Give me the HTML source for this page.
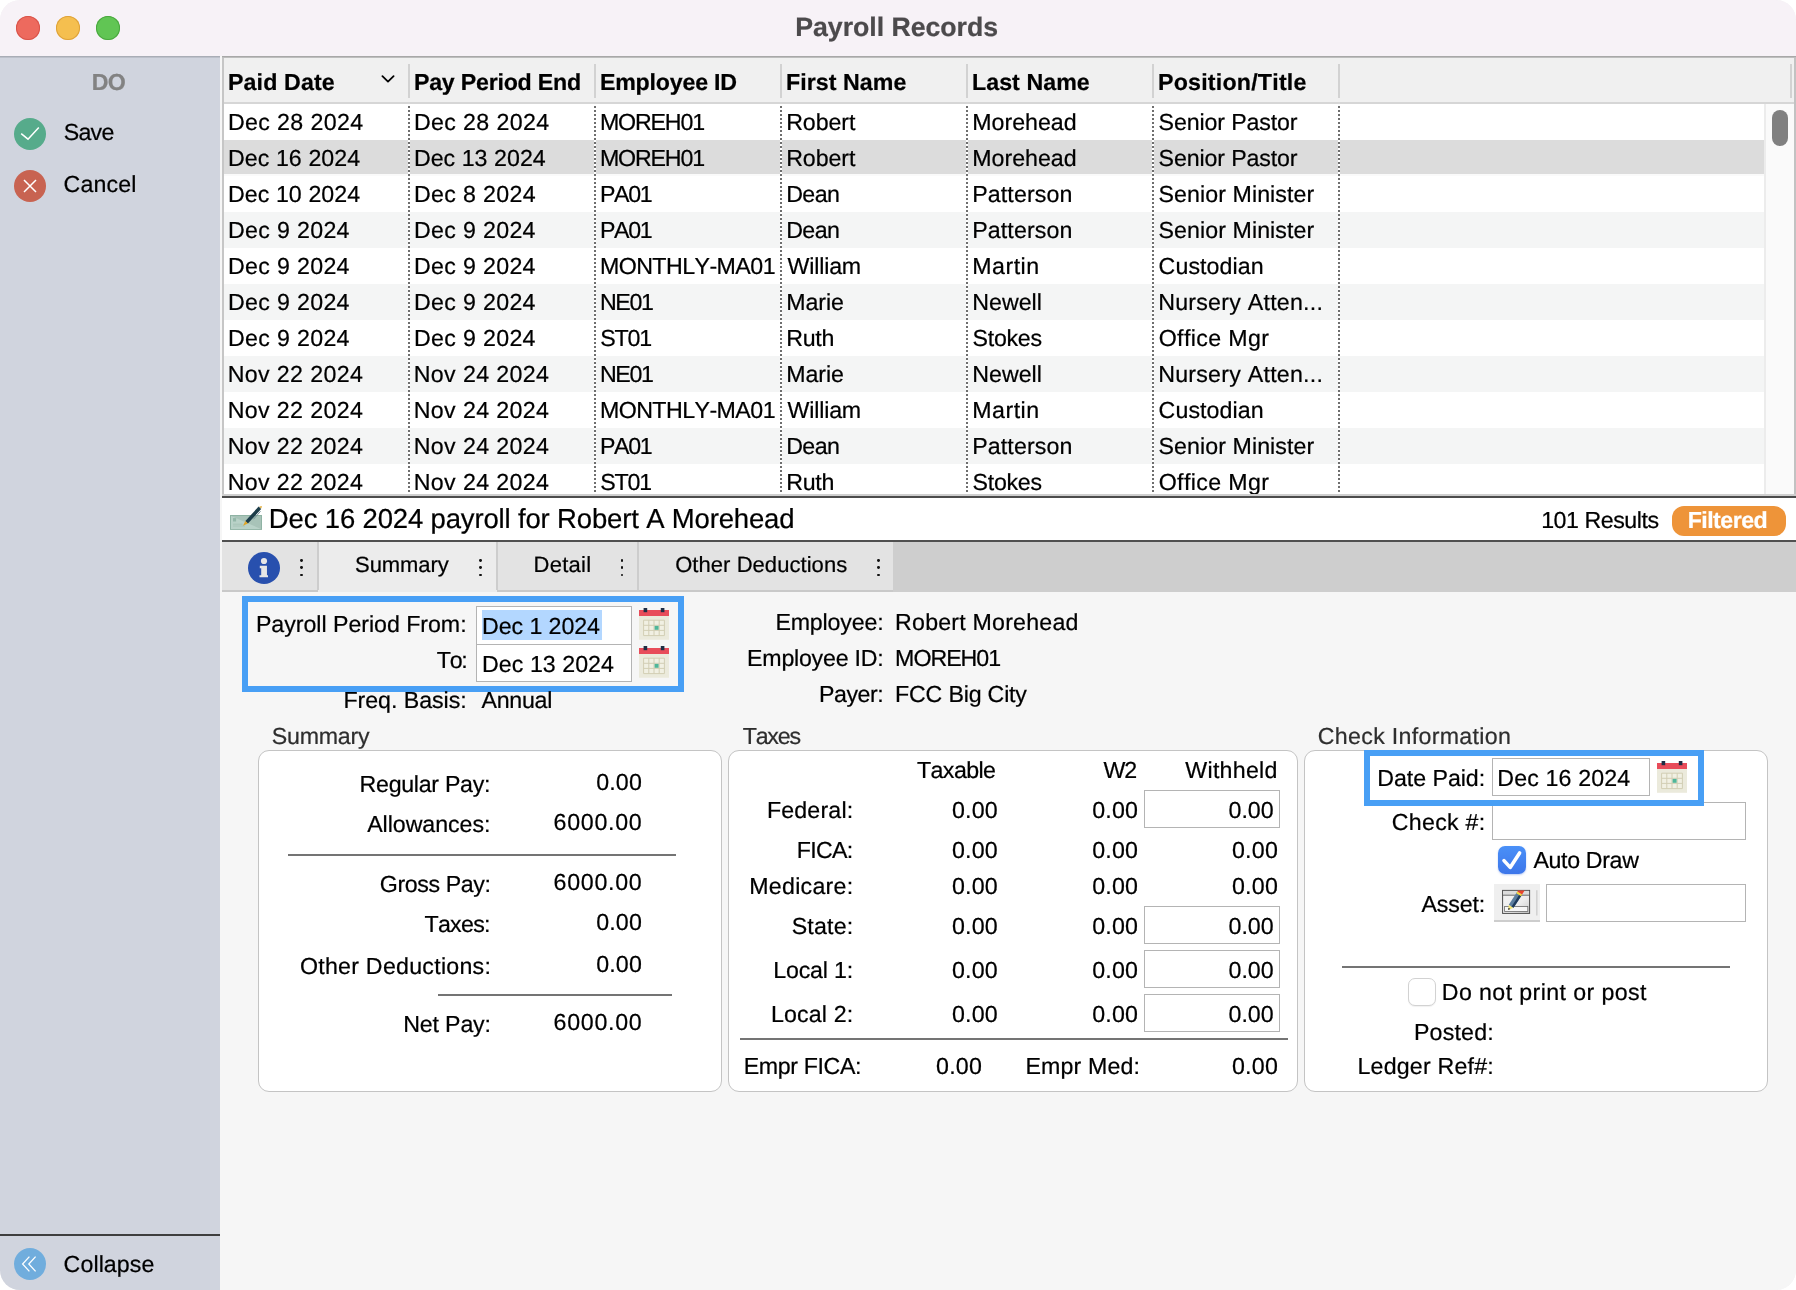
<!DOCTYPE html>
<html><head><meta charset="utf-8"><title>Payroll Records</title><style>html,body{margin:0;padding:0;background:#fff;}
body{text-rendering:geometricPrecision;width:1796px;height:1290px;overflow:hidden;position:relative;font-family:"Liberation Sans",sans-serif;font-kerning:none;}
#win{will-change:transform;position:absolute;left:0;top:0;width:1796px;height:1290px;border-radius:20px;overflow:hidden;background:#f6f6f6;}
.r{position:absolute;}
.t{position:absolute;white-space:nowrap;line-height:1;color:#000;-webkit-text-stroke:0.22px currentColor;}
</style></head><body><div id="win">
<div class="r" style="left:0px;top:0px;width:1796px;height:56px;background:#f7f2f7;"></div>
<div class="r" style="left:16px;top:16px;width:24px;height:24px;background:#ed6a5e;border-radius:50%;box-shadow:inset 0 0 0 1px #d8544a;"></div>
<div class="r" style="left:56px;top:16px;width:24px;height:24px;background:#f5bf4f;border-radius:50%;box-shadow:inset 0 0 0 1px #dea23a;"></div>
<div class="r" style="left:96px;top:16px;width:24px;height:24px;background:#61c554;border-radius:50%;box-shadow:inset 0 0 0 1px #4aa73f;"></div>
<div class="t" style="left:795.31px;top:14px;font-size:26.7px;letter-spacing:-0.037px;font-weight:bold;color:#4c4a4c;">Payroll Records</div>
<div class="r" style="left:0px;top:56px;width:220px;height:1234px;background:#d0d4de;"></div>
<div class="r" style="left:0px;top:56px;width:220px;height:1px;background:#a9adb6;"></div>
<div class="r" style="left:0px;top:57px;width:220px;height:1px;background:#bcc0ca;"></div>
<div class="t" style="left:91.75px;top:71px;font-size:23.2px;letter-spacing:-0.674px;font-weight:bold;color:#828282;">DO</div>
<svg class="r" style="left:14px;top:118px" width="32" height="32" viewBox="0 0 32 32"><circle cx="16" cy="16" r="16" fill="#56ab8b"/><path d="M7.2 15.6 L14 21.2 L24.8 9.4" fill="none" stroke="#fff" stroke-width="1.5"/></svg>
<div class="t" style="left:63.75px;top:121px;font-size:23.2px;letter-spacing:-0.765px;">Save</div>
<svg class="r" style="left:14px;top:170px" width="32" height="32" viewBox="0 0 32 32"><circle cx="16" cy="16" r="16" fill="#c86351"/><path d="M10 10 L22 22 M22 10 L10 22" fill="none" stroke="#fff" stroke-width="1.5"/></svg>
<div class="t" style="left:63.62px;top:173px;font-size:23.2px;letter-spacing:0.143px;">Cancel</div>
<div class="r" style="left:0px;top:1234px;width:220px;height:2px;background:#3e3e3e;"></div>
<svg class="r" style="left:14px;top:1248px" width="32" height="32" viewBox="0 0 32 32"><circle cx="16" cy="16" r="16" fill="#70addd"/><path d="M15.4 8.6 L8.6 16 L15.4 23.4 M21.6 8.6 L14.8 16 L21.6 23.4" fill="none" stroke="#fff" stroke-width="1.3"/></svg>
<div class="t" style="left:63.62px;top:1253px;font-size:23.2px;letter-spacing:0.076px;">Collapse</div>
<div class="r" style="left:220px;top:56px;width:1576px;height:1234px;background:#f6f6f6;"></div>
<div class="r" style="left:222px;top:56px;width:1574px;height:2px;background:#a8a8a8;"></div>
<div class="r" style="left:222px;top:57px;width:1574px;height:1px;background:#bebebe;"></div>
<div class="r" style="left:222px;top:58px;width:2px;height:438px;background:#c6c6c6;"></div>
<div class="r" style="left:1794px;top:58px;width:2px;height:438px;background:#c2c2c2;"></div>
<div class="r" style="left:224px;top:58px;width:1570px;height:44px;background:#f0f0f0;"></div>
<div class="r" style="left:224px;top:102px;width:1570px;height:2px;background:#d6d6d6;"></div>
<div class="r" style="left:224px;top:104px;width:1540px;height:390px;background:#fff;"></div>
<div class="r" style="left:224px;top:140px;width:1540px;height:34px;background:#dcdcdc;"></div>
<div class="r" style="left:224px;top:174px;width:1540px;height:2px;background:#fafafa;"></div>
<div class="r" style="left:224px;top:212px;width:1540px;height:36px;background:#f4f5f5;"></div>
<div class="r" style="left:224px;top:284px;width:1540px;height:36px;background:#f4f5f5;"></div>
<div class="r" style="left:224px;top:356px;width:1540px;height:36px;background:#f4f5f5;"></div>
<div class="r" style="left:224px;top:428px;width:1540px;height:36px;background:#f4f5f5;"></div>
<div class="t" style="left:227.90px;top:111px;font-size:23.2px;letter-spacing:0.382px;">Dec 28 2024</div>
<div class="t" style="left:413.90px;top:111px;font-size:23.2px;letter-spacing:0.382px;">Dec 28 2024</div>
<div class="t" style="left:599.90px;top:111px;font-size:23.2px;letter-spacing:-1.154px;">MOREH01</div>
<div class="t" style="left:786.20px;top:111px;font-size:23.2px;letter-spacing:-0.092px;">Robert</div>
<div class="t" style="left:972.20px;top:111px;font-size:23.2px;letter-spacing:0.004px;">Morehead</div>
<div class="t" style="left:1158.55px;top:111px;font-size:23.2px;letter-spacing:-0.127px;">Senior Pastor</div>
<div class="t" style="left:227.90px;top:147px;font-size:23.2px;letter-spacing:0.082px;">Dec 16 2024</div>
<div class="t" style="left:413.90px;top:147px;font-size:23.2px;letter-spacing:0.032px;">Dec 13 2024</div>
<div class="t" style="left:599.90px;top:147px;font-size:23.2px;letter-spacing:-1.154px;">MOREH01</div>
<div class="t" style="left:786.20px;top:147px;font-size:23.2px;letter-spacing:-0.092px;">Robert</div>
<div class="t" style="left:972.20px;top:147px;font-size:23.2px;letter-spacing:0.004px;">Morehead</div>
<div class="t" style="left:1158.55px;top:147px;font-size:23.2px;letter-spacing:-0.127px;">Senior Pastor</div>
<div class="t" style="left:227.90px;top:183px;font-size:23.2px;letter-spacing:0.082px;">Dec 10 2024</div>
<div class="t" style="left:413.90px;top:183px;font-size:23.2px;letter-spacing:0.358px;">Dec 8 2024</div>
<div class="t" style="left:599.90px;top:183px;font-size:23.2px;letter-spacing:-1.300px;">PA01</div>
<div class="t" style="left:786.20px;top:183px;font-size:23.2px;letter-spacing:-0.584px;">Dean</div>
<div class="t" style="left:972.20px;top:183px;font-size:23.2px;letter-spacing:0.113px;">Patterson</div>
<div class="t" style="left:1158.55px;top:183px;font-size:23.2px;letter-spacing:0.073px;">Senior Minister</div>
<div class="t" style="left:227.90px;top:219px;font-size:23.2px;letter-spacing:0.336px;">Dec 9 2024</div>
<div class="t" style="left:413.90px;top:219px;font-size:23.2px;letter-spacing:0.336px;">Dec 9 2024</div>
<div class="t" style="left:599.90px;top:219px;font-size:23.2px;letter-spacing:-1.300px;">PA01</div>
<div class="t" style="left:786.20px;top:219px;font-size:23.2px;letter-spacing:-0.584px;">Dean</div>
<div class="t" style="left:972.20px;top:219px;font-size:23.2px;letter-spacing:0.113px;">Patterson</div>
<div class="t" style="left:1158.55px;top:219px;font-size:23.2px;letter-spacing:0.073px;">Senior Minister</div>
<div class="t" style="left:227.90px;top:255px;font-size:23.2px;letter-spacing:0.336px;">Dec 9 2024</div>
<div class="t" style="left:413.90px;top:255px;font-size:23.2px;letter-spacing:0.336px;">Dec 9 2024</div>
<div class="t" style="left:599.90px;top:255px;font-size:23.2px;letter-spacing:-0.548px;">MONTHLY-MA01</div>
<div class="t" style="left:787.50px;top:255px;font-size:23.2px;letter-spacing:-0.169px;">William</div>
<div class="t" style="left:972.20px;top:255px;font-size:23.2px;letter-spacing:0.511px;">Martin</div>
<div class="t" style="left:1158.62px;top:255px;font-size:23.2px;letter-spacing:0.077px;">Custodian</div>
<div class="t" style="left:227.90px;top:291px;font-size:23.2px;letter-spacing:0.336px;">Dec 9 2024</div>
<div class="t" style="left:413.90px;top:291px;font-size:23.2px;letter-spacing:0.336px;">Dec 9 2024</div>
<div class="t" style="left:599.90px;top:291px;font-size:23.2px;letter-spacing:-1.300px;">NE01</div>
<div class="t" style="left:786.20px;top:291px;font-size:23.2px;letter-spacing:-0.069px;">Marie</div>
<div class="t" style="left:972.20px;top:291px;font-size:23.2px;letter-spacing:0.026px;">Newell</div>
<div class="t" style="left:1158.20px;top:291px;font-size:23.2px;letter-spacing:0.244px;">Nursery Atten...</div>
<div class="t" style="left:227.90px;top:327px;font-size:23.2px;letter-spacing:0.336px;">Dec 9 2024</div>
<div class="t" style="left:413.90px;top:327px;font-size:23.2px;letter-spacing:0.336px;">Dec 9 2024</div>
<div class="t" style="left:600.25px;top:327px;font-size:23.2px;letter-spacing:-1.188px;">ST01</div>
<div class="t" style="left:786.20px;top:327px;font-size:23.2px;letter-spacing:-0.265px;">Ruth</div>
<div class="t" style="left:972.55px;top:327px;font-size:23.2px;letter-spacing:-0.287px;">Stokes</div>
<div class="t" style="left:1158.70px;top:327px;font-size:23.2px;letter-spacing:0.377px;">Office Mgr</div>
<div class="t" style="left:227.70px;top:363px;font-size:23.2px;letter-spacing:0.362px;">Nov 22 2024</div>
<div class="t" style="left:413.70px;top:363px;font-size:23.2px;letter-spacing:0.382px;">Nov 24 2024</div>
<div class="t" style="left:599.90px;top:363px;font-size:23.2px;letter-spacing:-1.300px;">NE01</div>
<div class="t" style="left:786.20px;top:363px;font-size:23.2px;letter-spacing:-0.069px;">Marie</div>
<div class="t" style="left:972.20px;top:363px;font-size:23.2px;letter-spacing:0.026px;">Newell</div>
<div class="t" style="left:1158.20px;top:363px;font-size:23.2px;letter-spacing:0.244px;">Nursery Atten...</div>
<div class="t" style="left:227.70px;top:399px;font-size:23.2px;letter-spacing:0.362px;">Nov 22 2024</div>
<div class="t" style="left:413.70px;top:399px;font-size:23.2px;letter-spacing:0.382px;">Nov 24 2024</div>
<div class="t" style="left:599.90px;top:399px;font-size:23.2px;letter-spacing:-0.548px;">MONTHLY-MA01</div>
<div class="t" style="left:787.50px;top:399px;font-size:23.2px;letter-spacing:-0.169px;">William</div>
<div class="t" style="left:972.20px;top:399px;font-size:23.2px;letter-spacing:0.511px;">Martin</div>
<div class="t" style="left:1158.62px;top:399px;font-size:23.2px;letter-spacing:0.077px;">Custodian</div>
<div class="t" style="left:227.70px;top:435px;font-size:23.2px;letter-spacing:0.362px;">Nov 22 2024</div>
<div class="t" style="left:413.70px;top:435px;font-size:23.2px;letter-spacing:0.382px;">Nov 24 2024</div>
<div class="t" style="left:599.90px;top:435px;font-size:23.2px;letter-spacing:-1.300px;">PA01</div>
<div class="t" style="left:786.20px;top:435px;font-size:23.2px;letter-spacing:-0.584px;">Dean</div>
<div class="t" style="left:972.20px;top:435px;font-size:23.2px;letter-spacing:0.113px;">Patterson</div>
<div class="t" style="left:1158.55px;top:435px;font-size:23.2px;letter-spacing:0.073px;">Senior Minister</div>
<div class="t" style="left:227.70px;top:471px;font-size:23.2px;letter-spacing:0.362px;clip-path:inset(0 0 0px 0);">Nov 22 2024</div>
<div class="t" style="left:413.70px;top:471px;font-size:23.2px;letter-spacing:0.382px;clip-path:inset(0 0 0px 0);">Nov 24 2024</div>
<div class="t" style="left:600.25px;top:471px;font-size:23.2px;letter-spacing:-1.188px;clip-path:inset(0 0 0px 0);">ST01</div>
<div class="t" style="left:786.20px;top:471px;font-size:23.2px;letter-spacing:-0.265px;clip-path:inset(0 0 0px 0);">Ruth</div>
<div class="t" style="left:972.55px;top:471px;font-size:23.2px;letter-spacing:-0.287px;clip-path:inset(0 0 0px 0);">Stokes</div>
<div class="t" style="left:1158.70px;top:471px;font-size:23.2px;letter-spacing:0.377px;clip-path:inset(0 0 0px 0);">Office Mgr</div>
<div class="r" style="left:408px;top:104px;width:2px;height:390px;background:repeating-linear-gradient(to bottom,#fff 0,#fff 2px,#6e6e6e 2px,#6e6e6e 4px);"></div>
<div class="r" style="left:408px;top:64px;width:2px;height:34px;background:#d2d2d2;"></div>
<div class="r" style="left:594px;top:104px;width:2px;height:390px;background:repeating-linear-gradient(to bottom,#fff 0,#fff 2px,#6e6e6e 2px,#6e6e6e 4px);"></div>
<div class="r" style="left:594px;top:64px;width:2px;height:34px;background:#d2d2d2;"></div>
<div class="r" style="left:780px;top:104px;width:2px;height:390px;background:repeating-linear-gradient(to bottom,#fff 0,#fff 2px,#6e6e6e 2px,#6e6e6e 4px);"></div>
<div class="r" style="left:780px;top:64px;width:2px;height:34px;background:#d2d2d2;"></div>
<div class="r" style="left:966px;top:104px;width:2px;height:390px;background:repeating-linear-gradient(to bottom,#fff 0,#fff 2px,#6e6e6e 2px,#6e6e6e 4px);"></div>
<div class="r" style="left:966px;top:64px;width:2px;height:34px;background:#d2d2d2;"></div>
<div class="r" style="left:1152px;top:104px;width:2px;height:390px;background:repeating-linear-gradient(to bottom,#fff 0,#fff 2px,#6e6e6e 2px,#6e6e6e 4px);"></div>
<div class="r" style="left:1152px;top:64px;width:2px;height:34px;background:#d2d2d2;"></div>
<div class="r" style="left:1338px;top:104px;width:2px;height:390px;background:repeating-linear-gradient(to bottom,#fff 0,#fff 2px,#6e6e6e 2px,#6e6e6e 4px);"></div>
<div class="r" style="left:1338px;top:64px;width:2px;height:34px;background:#d2d2d2;"></div>
<div class="r" style="left:1790px;top:64px;width:2px;height:34px;background:#d2d2d2;"></div>
<div class="t" style="left:227.95px;top:71px;font-size:23.2px;letter-spacing:0.140px;font-weight:bold;">Paid Date</div>
<div class="t" style="left:413.95px;top:71px;font-size:23.2px;letter-spacing:-0.223px;font-weight:bold;">Pay Period End</div>
<div class="t" style="left:599.95px;top:71px;font-size:23.2px;letter-spacing:-0.202px;font-weight:bold;">Employee ID</div>
<div class="t" style="left:785.95px;top:71px;font-size:23.2px;letter-spacing:0.071px;font-weight:bold;">First Name</div>
<div class="t" style="left:971.95px;top:71px;font-size:23.2px;letter-spacing:0.064px;font-weight:bold;">Last Name</div>
<div class="t" style="left:1157.95px;top:71px;font-size:23.2px;letter-spacing:0.223px;font-weight:bold;">Position/Title</div>
<svg class="r" style="left:378px;top:72px" width="20" height="14" viewBox="0 0 20 14"><path d="M4.4 4.1 L10 9.6 L15.6 4.1" fill="none" stroke="#000" stroke-width="1.8" stroke-linecap="round" stroke-linejoin="round"/></svg>
<div class="r" style="left:1764px;top:104px;width:30px;height:390px;background:#fafafa;"></div>
<div class="r" style="left:1764px;top:104px;width:2px;height:390px;background:#ececec;"></div>
<div class="r" style="left:1772px;top:110px;width:16px;height:36px;background:#808080;border-radius:8px;"></div>
<div class="r" style="left:222px;top:494px;width:1574px;height:2px;background:#cfcfcf;"></div>
<div class="r" style="left:222px;top:496px;width:1574px;height:2px;background:#4c4c4c;"></div>
<div class="r" style="left:222px;top:498px;width:1574px;height:42px;background:#fff;"></div>
<div class="r" style="left:222px;top:540px;width:1574px;height:2px;background:#505050;"></div>
<svg class="r" style="left:228px;top:504px" width="36" height="28" viewBox="0 0 36 28">
<rect x="2.5" y="11.5" width="31" height="13.9" fill="#a8c3b8" stroke="#8fb3a4" stroke-width="1"/>
<path d="M3 12 L33 24.9 H3 Z" fill="#b9d2c8"/>
<rect x="5" y="14.1" width="3.1" height="3.4" fill="#93b6a8"/>
<path d="M5 20.2 H14.5 M5 22 H17" stroke="#a3c0b4" stroke-width="0.8"/>
<path d="M17.38 17.03 L30.63 2.53 L33.17 5.07 L19.92 19.57 Z" fill="#1d3d4a"/>
<path d="M15 21.7 L17.38 17.03 L19.92 19.57 Z" fill="#e0a526"/>
<path d="M31.3 2.6 L33.1 4.4 L34.1 2.3 Z" fill="#e0a526"/>
<path d="M32.6 7.2 L25.4 15.3" stroke="#6f8a93" stroke-width="0.9" fill="none"/>
</svg>
<div class="t" style="left:268.84px;top:505px;font-size:27.5px;letter-spacing:-0.156px;">Dec 16 2024 payroll for Robert A Morehead</div>
<div class="t" style="left:1541.13px;top:509px;font-size:23.2px;letter-spacing:-0.451px;">101 Results</div>
<div class="r" style="left:1672px;top:506px;width:114px;height:30px;background:#ee9439;border-radius:12px;"></div>
<div class="t" style="left:1687.65px;top:509px;font-size:23.2px;letter-spacing:-0.530px;font-weight:bold;color:#fff;">Filtered</div>
<div class="r" style="left:222px;top:542px;width:1574px;height:50px;background:#cecece;"></div>
<div class="r" style="left:222px;top:542px;width:96px;height:48px;background:#e3e3e3;"></div>
<div class="r" style="left:222px;top:590px;width:96px;height:2px;background:#c9c9c9;"></div>
<div class="r" style="left:318px;top:542px;width:179px;height:50px;background:#ececec;"></div>
<div class="r" style="left:497px;top:542px;width:396px;height:48px;background:#e3e3e3;"></div>
<div class="r" style="left:497px;top:590px;width:396px;height:2px;background:#c9c9c9;"></div>
<div class="r" style="left:317px;top:542px;width:2px;height:48px;background:#cdcdcd;"></div>
<div class="r" style="left:496px;top:542px;width:2px;height:48px;background:#cdcdcd;"></div>
<div class="r" style="left:637px;top:542px;width:2px;height:48px;background:#cdcdcd;"></div>
<svg class="r" style="left:248px;top:552px" width="32" height="32" viewBox="0 0 32 32"><circle cx="16" cy="16" r="16" fill="#2850ae"/>
<circle cx="16" cy="9" r="3.1" fill="#e6e6e6"/><path d="M11.8 13.8 H18.95 V23.3 H20 V25.15 H11.5 V23.3 H13.2 V16.3 H11.8 Z" fill="#e6e6e6"/></svg>
<div class="r" style="left:300.4px;top:559.2px;width:2.8000000000000114px;height:2.7999999999999545px;background:#111;border-radius:50%;"></div>
<div class="r" style="left:300.4px;top:566.4px;width:2.8000000000000114px;height:2.800000000000068px;background:#111;border-radius:50%;"></div>
<div class="r" style="left:300.4px;top:573.7px;width:2.8000000000000114px;height:2.7999999999999545px;background:#111;border-radius:50%;"></div>
<div class="r" style="left:479.4px;top:559.2px;width:2.8000000000000114px;height:2.7999999999999545px;background:#111;border-radius:50%;"></div>
<div class="r" style="left:479.4px;top:566.4px;width:2.8000000000000114px;height:2.800000000000068px;background:#111;border-radius:50%;"></div>
<div class="r" style="left:479.4px;top:573.7px;width:2.8000000000000114px;height:2.7999999999999545px;background:#111;border-radius:50%;"></div>
<div class="r" style="left:620.6px;top:559.2px;width:2.7999999999999545px;height:2.7999999999999545px;background:#111;border-radius:50%;"></div>
<div class="r" style="left:620.6px;top:566.4px;width:2.7999999999999545px;height:2.800000000000068px;background:#111;border-radius:50%;"></div>
<div class="r" style="left:620.6px;top:573.7px;width:2.7999999999999545px;height:2.7999999999999545px;background:#111;border-radius:50%;"></div>
<div class="r" style="left:876.8px;top:559.2px;width:2.800000000000068px;height:2.7999999999999545px;background:#111;border-radius:50%;"></div>
<div class="r" style="left:876.8px;top:566.4px;width:2.800000000000068px;height:2.800000000000068px;background:#111;border-radius:50%;"></div>
<div class="r" style="left:876.8px;top:573.7px;width:2.800000000000068px;height:2.7999999999999545px;background:#111;border-radius:50%;"></div>
<div class="t" style="left:355.10px;top:554px;font-size:22px;letter-spacing:-0.097px;">Summary</div>
<div class="t" style="left:533.60px;top:554px;font-size:22px;letter-spacing:0.246px;">Detail</div>
<div class="t" style="left:675.16px;top:554px;font-size:22px;letter-spacing:0.056px;">Other Deductions</div>
<div class="r" style="left:242px;top:596px;width:442px;height:96px;box-sizing:border-box;border:6px solid #489ff5;"></div>
<div class="r" style="left:476px;top:606px;width:156px;height:38.5px;background:#fff;box-sizing:border-box;border:1.5px solid #b4b4b4;"></div>
<div class="r" style="left:476px;top:643.5px;width:156px;height:38.5px;background:#fff;box-sizing:border-box;border:1.5px solid #b4b4b4;"></div>
<div class="r" style="left:482px;top:610px;width:120px;height:30px;background:#b3d7ff;"></div>
<div class="t" style="left:255.90px;top:613px;font-size:23.2px;letter-spacing:-0.033px;">Payroll Period From:</div>
<div class="t" style="left:482.10px;top:615px;font-size:23.2px;letter-spacing:-0.087px;">Dec 1 2024</div>
<div class="t" style="left:436.78px;top:649px;font-size:23.2px;letter-spacing:-1.300px;">To:</div>
<div class="t" style="left:482.10px;top:653px;font-size:23.2px;letter-spacing:0.032px;">Dec 13 2024</div>
<div class="t" style="left:343.40px;top:689px;font-size:23.2px;letter-spacing:-0.041px;">Freq. Basis:</div>
<div class="t" style="left:481.45px;top:689px;font-size:23.2px;letter-spacing:-0.268px;">Annual</div>
<svg class="r" style="left:638px;top:606px" width="32" height="36" viewBox="0 0 32 36">
<rect x="1" y="4" width="30" height="29.8" fill="#ebeadc"/><rect x="1" y="4" width="30" height="6" fill="#e84c5a"/>
<rect x="5.6" y="2" width="3.6" height="4.2" fill="#1f2d44"/><rect x="22.8" y="2" width="3.6" height="4.2" fill="#1f2d44"/>
<rect x="5.6" y="14.2" width="20.8" height="15.4" fill="#f1f0e3"/>
<path d="M5.6 14.2 H26.4 V29.6 H5.6 Z M5.6 19.3 H26.4 M5.6 24.4 H26.4 M10.8 14.2 V29.6 M16 14.2 V29.6 M21.2 14.2 V29.6" fill="none" stroke="#d2ceb4" stroke-width="1"/>
<rect x="16.6" y="19.9" width="4" height="3.9" fill="#4fb699"/></svg>
<svg class="r" style="left:638px;top:644px" width="32" height="36" viewBox="0 0 32 36">
<rect x="1" y="4" width="30" height="29.8" fill="#ebeadc"/><rect x="1" y="4" width="30" height="6" fill="#e84c5a"/>
<rect x="5.6" y="2" width="3.6" height="4.2" fill="#1f2d44"/><rect x="22.8" y="2" width="3.6" height="4.2" fill="#1f2d44"/>
<rect x="5.6" y="14.2" width="20.8" height="15.4" fill="#f1f0e3"/>
<path d="M5.6 14.2 H26.4 V29.6 H5.6 Z M5.6 19.3 H26.4 M5.6 24.4 H26.4 M10.8 14.2 V29.6 M16 14.2 V29.6 M21.2 14.2 V29.6" fill="none" stroke="#d2ceb4" stroke-width="1"/>
<rect x="16.6" y="19.9" width="4" height="3.9" fill="#4fb699"/></svg>
<div class="t" style="left:775.40px;top:611px;font-size:23.2px;letter-spacing:-0.161px;">Employee:</div>
<div class="t" style="left:895.10px;top:611px;font-size:23.2px;letter-spacing:0.204px;">Robert Morehead</div>
<div class="t" style="left:747.10px;top:647px;font-size:23.2px;letter-spacing:-0.240px;">Employee ID:</div>
<div class="t" style="left:895.10px;top:647px;font-size:23.2px;letter-spacing:-1.021px;">MOREH01</div>
<div class="t" style="left:819.10px;top:683px;font-size:23.2px;letter-spacing:-0.486px;">Payer:</div>
<div class="t" style="left:895.10px;top:683px;font-size:23.2px;letter-spacing:-0.192px;">FCC Big City</div>
<div class="t" style="left:271.85px;top:725px;font-size:23.2px;letter-spacing:-0.243px;color:#2e2e2e;">Summary</div>
<div class="t" style="left:742.68px;top:725px;font-size:23.2px;letter-spacing:-1.179px;color:#2e2e2e;">Taxes</div>
<div class="t" style="left:1317.82px;top:725px;font-size:23.2px;letter-spacing:0.301px;color:#2e2e2e;">Check Information</div>
<div class="r" style="left:258px;top:750px;width:464px;height:342px;background:#fff;box-sizing:border-box;border:1.5px solid #c4c4c4;border-radius:11px;"></div>
<div class="r" style="left:728px;top:750px;width:570px;height:342px;background:#fff;box-sizing:border-box;border:1.5px solid #c4c4c4;border-radius:11px;"></div>
<div class="r" style="left:1304px;top:750px;width:464px;height:342px;background:#fff;box-sizing:border-box;border:1.5px solid #c4c4c4;border-radius:11px;"></div>
<div class="t" style="left:359.60px;top:773px;font-size:23.2px;letter-spacing:-0.290px;">Regular Pay:</div>
<div class="t" style="left:596.29px;top:771px;font-size:23.2px;letter-spacing:0.120px;">0.00</div>
<div class="t" style="left:367.15px;top:813px;font-size:23.2px;letter-spacing:-0.043px;">Allowances:</div>
<div class="t" style="left:553.52px;top:811px;font-size:23.2px;letter-spacing:0.737px;">6000.00</div>
<div class="t" style="left:379.83px;top:873px;font-size:23.2px;letter-spacing:-0.395px;">Gross Pay:</div>
<div class="t" style="left:553.52px;top:871px;font-size:23.2px;letter-spacing:0.737px;">6000.00</div>
<div class="t" style="left:424.48px;top:913px;font-size:23.2px;letter-spacing:-0.717px;">Taxes:</div>
<div class="t" style="left:596.29px;top:911px;font-size:23.2px;letter-spacing:0.120px;">0.00</div>
<div class="t" style="left:299.90px;top:955px;font-size:23.2px;letter-spacing:0.258px;">Other Deductions:</div>
<div class="t" style="left:596.29px;top:953px;font-size:23.2px;letter-spacing:0.120px;">0.00</div>
<div class="t" style="left:403.30px;top:1013px;font-size:23.2px;letter-spacing:-0.179px;">Net Pay:</div>
<div class="t" style="left:553.52px;top:1011px;font-size:23.2px;letter-spacing:0.737px;">6000.00</div>
<div class="r" style="left:288px;top:854px;width:388px;height:2px;background:#747474;"></div>
<div class="r" style="left:438px;top:994px;width:234px;height:2px;background:#747474;"></div>
<div class="t" style="left:916.98px;top:759px;font-size:23.2px;letter-spacing:-0.581px;">Taxable</div>
<div class="t" style="left:1103.60px;top:759px;font-size:23.2px;letter-spacing:-1.300px;">W2</div>
<div class="t" style="left:1185.30px;top:759px;font-size:23.2px;letter-spacing:0.276px;">Withheld</div>
<div class="r" style="left:1144px;top:790px;width:136px;height:38px;background:#fff;box-sizing:border-box;border:1.5px solid #b4b4b4;"></div>
<div class="r" style="left:1144px;top:906px;width:136px;height:38px;background:#fff;box-sizing:border-box;border:1.5px solid #b4b4b4;"></div>
<div class="r" style="left:1144px;top:950px;width:136px;height:38px;background:#fff;box-sizing:border-box;border:1.5px solid #b4b4b4;"></div>
<div class="r" style="left:1144px;top:994px;width:136px;height:38px;background:#fff;box-sizing:border-box;border:1.5px solid #b4b4b4;"></div>
<div class="t" style="left:766.90px;top:799px;font-size:23.2px;letter-spacing:0.173px;">Federal:</div>
<div class="t" style="left:951.89px;top:799px;font-size:23.2px;letter-spacing:0.220px;">0.00</div>
<div class="t" style="left:1092.19px;top:799px;font-size:23.2px;letter-spacing:0.220px;">0.00</div>
<div class="t" style="left:1228.49px;top:799px;font-size:23.2px;letter-spacing:0.020px;">0.00</div>
<div class="t" style="left:796.80px;top:839px;font-size:23.2px;letter-spacing:-0.717px;">FICA:</div>
<div class="t" style="left:951.89px;top:839px;font-size:23.2px;letter-spacing:0.220px;">0.00</div>
<div class="t" style="left:1092.19px;top:839px;font-size:23.2px;letter-spacing:0.220px;">0.00</div>
<div class="t" style="left:1231.99px;top:839px;font-size:23.2px;letter-spacing:0.220px;">0.00</div>
<div class="t" style="left:749.30px;top:875px;font-size:23.2px;letter-spacing:0.257px;">Medicare:</div>
<div class="t" style="left:951.89px;top:875px;font-size:23.2px;letter-spacing:0.220px;">0.00</div>
<div class="t" style="left:1092.19px;top:875px;font-size:23.2px;letter-spacing:0.220px;">0.00</div>
<div class="t" style="left:1231.99px;top:875px;font-size:23.2px;letter-spacing:0.220px;">0.00</div>
<div class="t" style="left:791.65px;top:915px;font-size:23.2px;letter-spacing:0.191px;">State:</div>
<div class="t" style="left:951.89px;top:915px;font-size:23.2px;letter-spacing:0.220px;">0.00</div>
<div class="t" style="left:1092.19px;top:915px;font-size:23.2px;letter-spacing:0.220px;">0.00</div>
<div class="t" style="left:1228.49px;top:915px;font-size:23.2px;letter-spacing:0.020px;">0.00</div>
<div class="t" style="left:773.20px;top:959px;font-size:23.2px;letter-spacing:-0.176px;">Local 1:</div>
<div class="t" style="left:951.89px;top:959px;font-size:23.2px;letter-spacing:0.220px;">0.00</div>
<div class="t" style="left:1092.19px;top:959px;font-size:23.2px;letter-spacing:0.220px;">0.00</div>
<div class="t" style="left:1228.49px;top:959px;font-size:23.2px;letter-spacing:0.020px;">0.00</div>
<div class="t" style="left:771.00px;top:1003px;font-size:23.2px;letter-spacing:0.138px;">Local 2:</div>
<div class="t" style="left:951.89px;top:1003px;font-size:23.2px;letter-spacing:0.220px;">0.00</div>
<div class="t" style="left:1092.19px;top:1003px;font-size:23.2px;letter-spacing:0.220px;">0.00</div>
<div class="t" style="left:1228.49px;top:1003px;font-size:23.2px;letter-spacing:0.020px;">0.00</div>
<div class="r" style="left:740px;top:1038px;width:548px;height:2px;background:#747474;"></div>
<div class="t" style="left:743.70px;top:1055px;font-size:23.2px;letter-spacing:-0.372px;">Empr FICA:</div>
<div class="t" style="left:936.09px;top:1055px;font-size:23.2px;letter-spacing:0.220px;">0.00</div>
<div class="t" style="left:1025.40px;top:1055px;font-size:23.2px;letter-spacing:0.159px;">Empr Med:</div>
<div class="t" style="left:1231.99px;top:1055px;font-size:23.2px;letter-spacing:0.220px;">0.00</div>
<div class="t" style="left:1377.30px;top:767px;font-size:23.2px;letter-spacing:-0.045px;">Date Paid:</div>
<div class="r" style="left:1492px;top:758px;width:158px;height:38px;background:#fff;box-sizing:border-box;border:1.5px solid #b4b4b4;"></div>
<div class="t" style="left:1497.30px;top:767px;font-size:23.2px;letter-spacing:0.132px;">Dec 16 2024</div>
<svg class="r" style="left:1656px;top:758.5px" width="32" height="36" viewBox="0 0 32 36">
<rect x="1" y="4" width="30" height="29.8" fill="#ebeadc"/><rect x="1" y="4" width="30" height="6" fill="#e84c5a"/>
<rect x="5.6" y="2" width="3.6" height="4.2" fill="#1f2d44"/><rect x="22.8" y="2" width="3.6" height="4.2" fill="#1f2d44"/>
<rect x="5.6" y="14.2" width="20.8" height="15.4" fill="#f1f0e3"/>
<path d="M5.6 14.2 H26.4 V29.6 H5.6 Z M5.6 19.3 H26.4 M5.6 24.4 H26.4 M10.8 14.2 V29.6 M16 14.2 V29.6 M21.2 14.2 V29.6" fill="none" stroke="#d2ceb4" stroke-width="1"/>
<rect x="16.6" y="19.9" width="4" height="3.9" fill="#4fb699"/></svg>
<div class="t" style="left:1391.82px;top:811px;font-size:23.2px;letter-spacing:0.263px;">Check #:</div>
<div class="r" style="left:1492px;top:802px;width:254px;height:38px;background:#fff;box-sizing:border-box;border:1.5px solid #b4b4b4;"></div>
<div class="r" style="left:1498px;top:846px;width:28px;height:28px;border-radius:7px;background:linear-gradient(#4a90f8,#3d76ea);box-shadow:0 1px 2px rgba(60,110,220,.35);"></div>
<svg class="r" style="left:1498px;top:846px" width="28" height="28" viewBox="0 0 28 28"><path d="M6 14.6 L12.2 21.4 L21.6 7" fill="none" stroke="#fff" stroke-width="3.6" stroke-linecap="round" stroke-linejoin="round"/></svg>
<div class="r" style="left:1364px;top:750px;width:340px;height:56px;box-sizing:border-box;border:6px solid #489ff5;"></div>
<div class="t" style="left:1533.45px;top:849px;font-size:23.2px;letter-spacing:-0.352px;">Auto Draw</div>
<div class="t" style="left:1421.45px;top:893px;font-size:23.2px;letter-spacing:-0.141px;">Asset:</div>
<div class="r" style="left:1494px;top:884px;width:46px;height:38px;background:#efefef;"></div>
<div class="r" style="left:1494px;top:920px;width:46px;height:2px;background:#cdcdcd;"></div>
<svg class="r" style="left:1500px;top:888px" width="40" height="30" viewBox="0 0 40 30">
<defs><linearGradient id="wg" x1="0" y1="0" x2="1" y2="1"><stop offset="0" stop-color="#f4f4f4"/><stop offset="0.6" stop-color="#ededed"/><stop offset="1" stop-color="#c9c9c9"/></linearGradient></defs>
<rect x="2.6" y="2.4" width="27" height="23" fill="url(#wg)" stroke="#4a4a4a" stroke-width="1"/>
<rect x="3.1" y="2.9" width="26" height="4" fill="#dcdcdc"/><path d="M2.6 7.2 H29.6" stroke="#5a5a5a" stroke-width="0.9"/>
<rect x="4.6" y="18.4" width="23.2" height="5" fill="#f6f6f6" stroke="#6a6a6a" stroke-width="0.8"/>
<path d="M8.2 22 L8.8 16.8 L13.6 19.8 Z" fill="#f6e777"/><path d="M8.2 22 L8.5 19.8 L10.3 20.9 Z" fill="#1a1a2a"/>
<path d="M8.8 16.8 L16.9 4.2 L21.7 7.2 L13.6 19.8 Z" fill="#5d7f9f"/><path d="M11.6 18.6 L19.7 6 L21.7 7.2 L13.6 19.8 Z" fill="#1f3b5c"/>
<path d="M16.3 5.2 L17.3 3.6 L22.1 6.6 L21.1 8.2 Z" fill="#f3d83a"/>
<path d="M17.3 3.6 L18.1 2.4 H24.6 L22.1 6.6 Z" fill="#e8452c"/>
<path d="M36.8 2.2 V27.6" stroke="#d2d2d2" stroke-width="1.6"/></svg>
<div class="r" style="left:1546px;top:884px;width:200px;height:38px;background:#fff;box-sizing:border-box;border:1.5px solid #b4b4b4;"></div>
<div class="r" style="left:1342px;top:966px;width:388px;height:2px;background:#747474;"></div>
<div class="r" style="left:1408px;top:978px;width:28px;height:28px;background:#fff;box-sizing:border-box;border:1.5px solid #d2d2d2;border-radius:7px;box-shadow:0 1px 1px rgba(0,0,0,.06);"></div>
<div class="t" style="left:1441.80px;top:981px;font-size:23.2px;letter-spacing:0.393px;">Do not print or post</div>
<div class="t" style="left:1413.90px;top:1021px;font-size:23.2px;letter-spacing:0.191px;">Posted:</div>
<div class="t" style="left:1357.50px;top:1055px;font-size:23.2px;letter-spacing:0.190px;">Ledger Ref#:</div>
</div></body></html>
